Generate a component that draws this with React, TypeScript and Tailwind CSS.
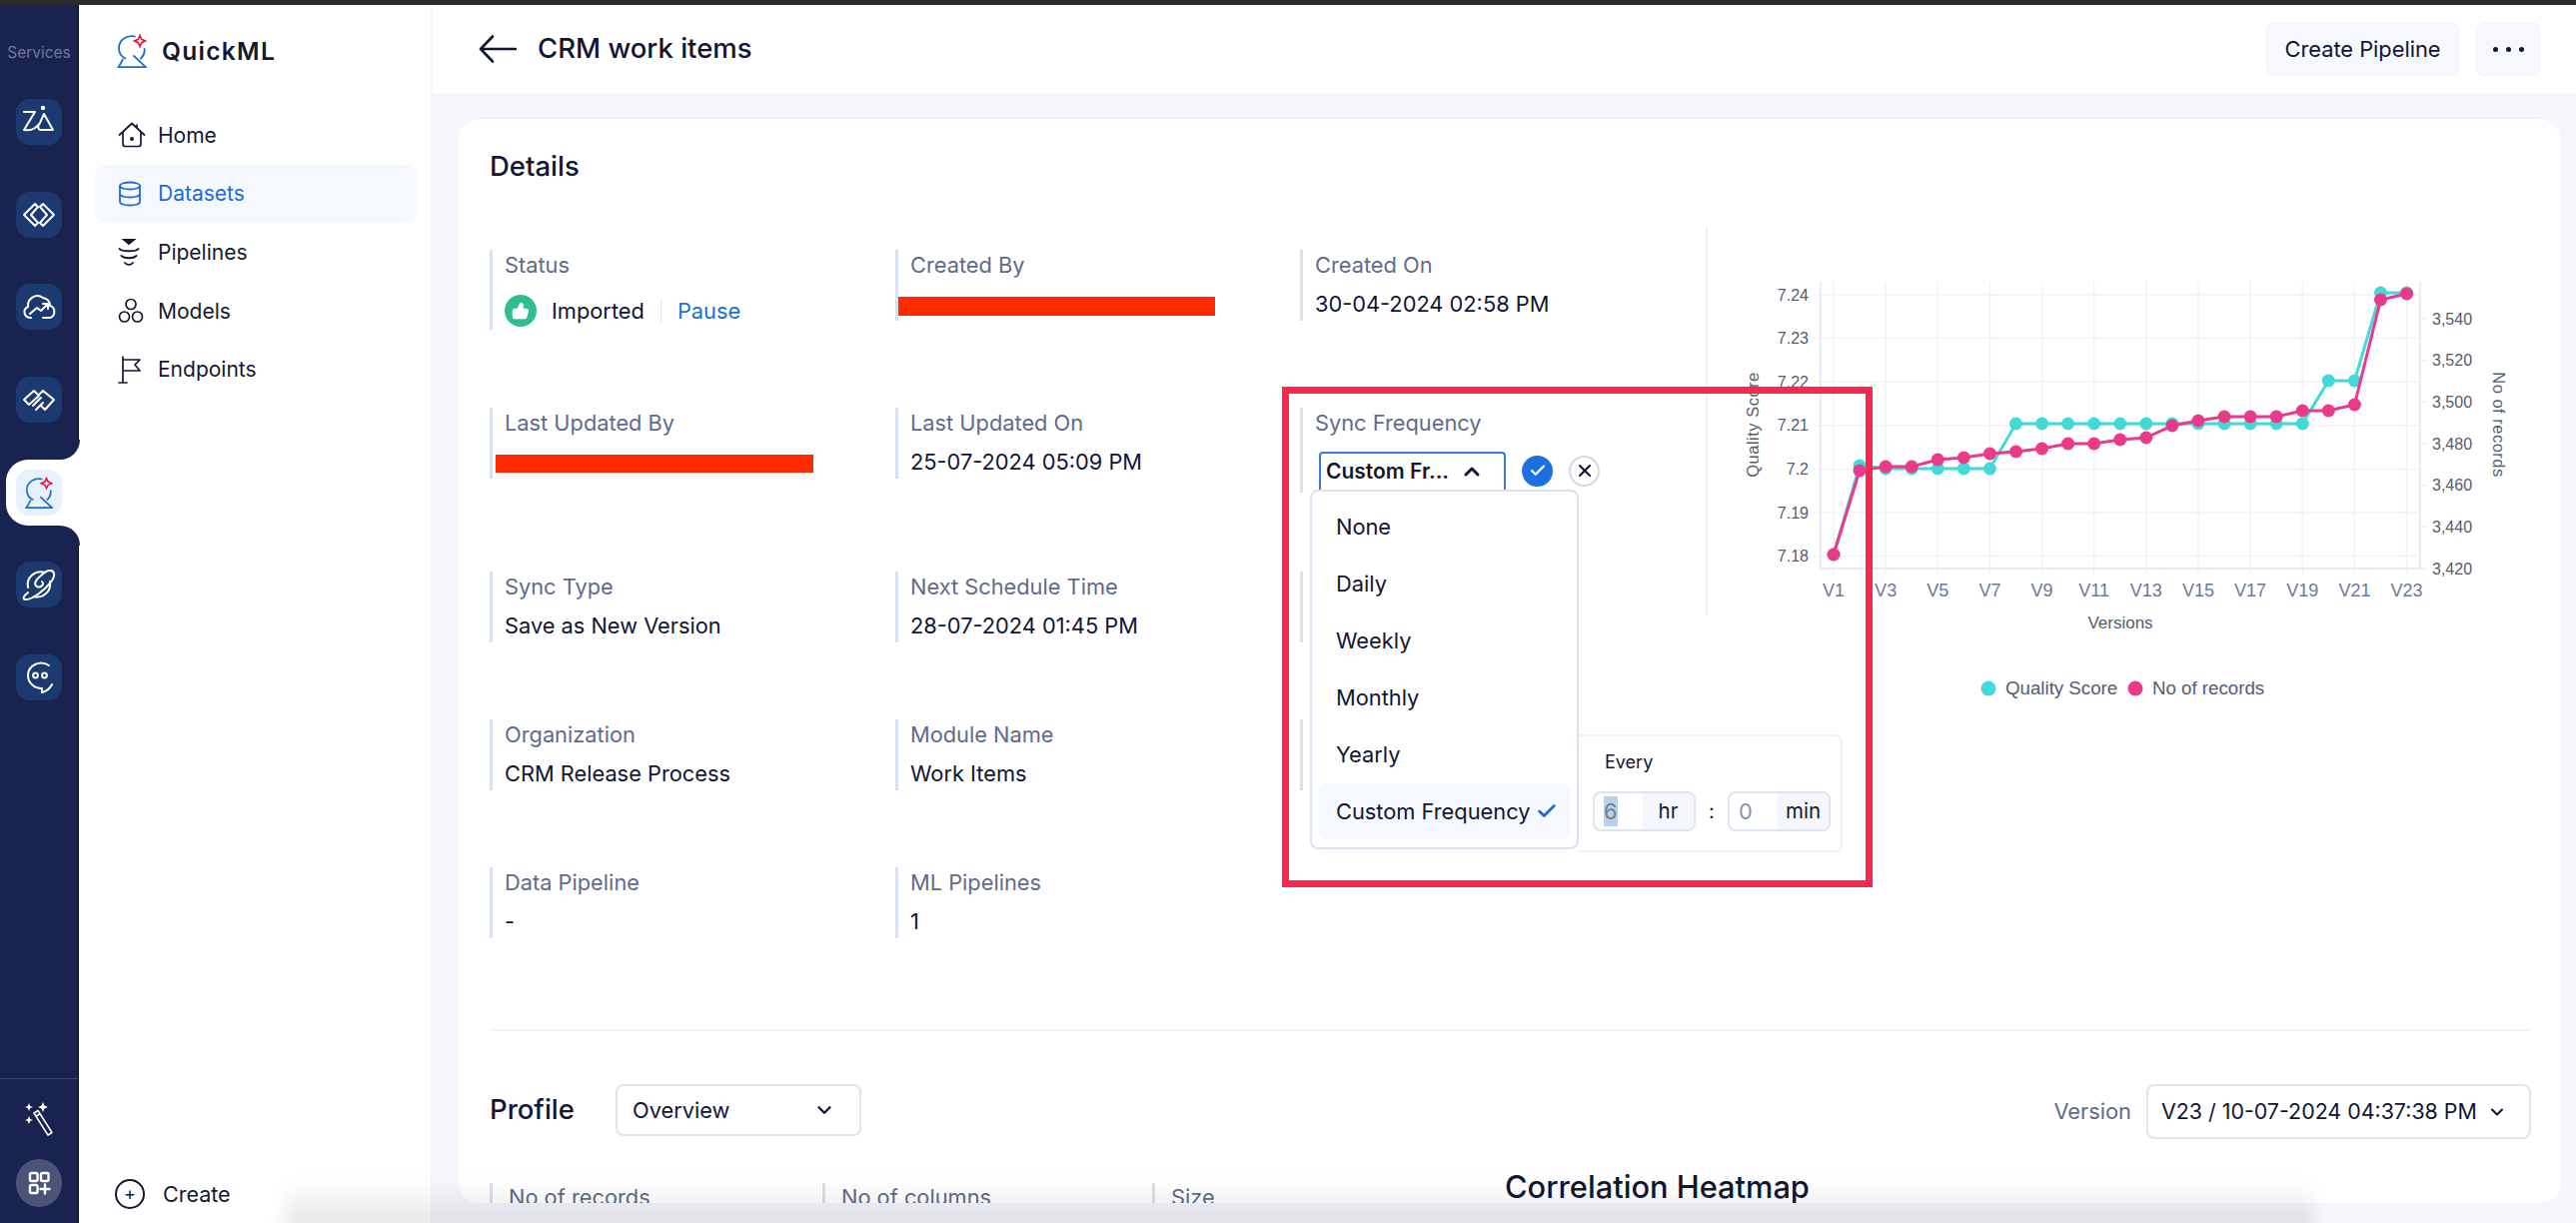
import { Check, ChevronDown, ChevronUp, ThumbsUp, X } from "lucide-react";
import type { ReactNode } from "react";

const NAVY = "bg-[#18244f]";

function QuickLogo({ className }: { className: string }) {
  return (
    <svg viewBox="0 0 30 34" fill="none" className={className} strokeLinecap="round">
      <path d="M18 2.500C10 0.500 2 6 2 14c0 5 3 9 6.500 10.500" stroke="#1c6fc4" strokeWidth="1.800" />
      <path d="M27.500 15c0.600 3.500-0.500 6.500-3.500 9.500M17 22l12 11.200H1.500l4.500-7.700" stroke="#1c6fc4" strokeWidth="1.800" />
      <path d="M23 1.500l1.700 3.800 3.800 1.700-3.800 1.700L23 12.500l-1.700-3.800L17.500 7l3.800-1.700z" stroke="#e8173f" strokeWidth="1.700" />
    </svg>
  );
}

function RailIcon({ children, active }: { children: ReactNode; active?: boolean }) {
  if (active) {
    return (
      <div className="relative h-[46px] w-[46px]">
        <div className="absolute -left-[10px] -right-[18px] -top-[10px] h-[66px] rounded-l-[22px] bg-white" />
        <div className="absolute -right-[18px] -top-[30px] h-5 w-5 bg-white">
          <div className={`h-full w-full rounded-br-[20px] ${NAVY}`} />
        </div>
        <div className="absolute -right-[18px] top-[56px] h-5 w-5 bg-white">
          <div className={`h-full w-full rounded-tr-[20px] ${NAVY}`} />
        </div>
        <div className="relative flex h-[46px] w-[46px] items-center justify-center rounded-[14px] bg-[#e8f0fb]">{children}</div>
      </div>
    );
  }
  return (
    <div className="flex h-[46px] w-[46px] items-center justify-center rounded-[14px] bg-[#1c3a70]">
      <svg viewBox="0 0 46 46" fill="none" stroke="white" strokeWidth="2" strokeLinecap="round" strokeLinejoin="round" className="h-[46px] w-[46px]">
        {children}
      </svg>
    </div>
  );
}

function Rail() {
  return (
    <div className={`z-10 flex w-[79px] shrink-0 flex-col items-center border-r border-[#0c1020] ${NAVY}`}>
      <div className="mt-[37px] h-[22px] whitespace-nowrap text-[15.500px] leading-[22px] text-[#6f7a9a]">Services</div>
      <div className="mt-[35px] flex flex-col gap-[46.700px]">
        <RailIcon>
          <path d="M8 13h11L8 31c6 1 12-1 16-7l4-9 9 16H25c-3 0-4-4-1-7" />
          <circle cx="27" cy="9" r="1.200" fill="white" />
        </RailIcon>
        <RailIcon>
          <path d="M19 12L8 23l11 11 3-3-7-8 7-8zM27 12l11 11-11 11-3-3 7-8-7-8z" />
        </RailIcon>
        <RailIcon>
          <path d="M15 34c-7 0-9-8-3-11-1-8 8-14 15-9 5 1 7 4 7 8 6 1 6 12-1 12h-6" />
          <path d="M14 30l7-6 4 3 7-7M27 20h5v5" />
        </RailIcon>
        <RailIcon>
          <path d="M18 14l-10 9 5 5 10-9zM17 29l8-8M20 33l7-7M27 14l11 9-9 10-4-4M27 14l-3 3" />
        </RailIcon>
        <RailIcon active>
          <QuickLogo className="h-[32px] w-[28px]" />
        </RailIcon>
        <RailIcon>
          <path d="M12 26A13 13 0 0 1 29 11M34 20A13 13 0 0 1 18 35" />
          <path d="M12 31c-6 5-5 7-2 7 6 0 19-9 26-19 4-6 2-10-2-10-3 0-6 2-9 5-5 4-8 9-4 11 4 2 8-3 5-5" />
        </RailIcon>
        <RailIcon>
          <path d="M33 11c-9-6-21 0-21 10 0 8 7 13 14 13l0 4c4-1 8-4 10-8" />
          <circle cx="19.500" cy="21" r="2.400" />
          <circle cx="28.500" cy="21" r="2.400" />
        </RailIcon>
      </div>
      <div className="mt-auto h-px w-full bg-[#3b4770]" />
      <svg viewBox="0 0 30 34" fill="none" className="mt-[23px] h-[34px] w-[30px]">
        <path d="M10 11l4-2.500 14 22-4 2.500zM11.500 14.500l4-2.500" stroke="white" strokeWidth="1.500" strokeLinejoin="round" />
        <path d="M19 0l1.500 3.500L24 5l-3.500 1.500L19 10l-1.500-3.500L14 5l3.500-1.500zM5 1l1.200 3L9 5 6.200 6 5 9 3.800 6 1 5l2.800-1zM5 14l1.200 3 2.800 1-2.800 1L5 22l-1.200-3L1 18l2.800-1z" fill="white" />
      </svg>
      <div className="mb-[16px] mt-[23px] flex h-[48px] w-[46px] items-center justify-center rounded-full bg-[#4a5478]">
        <svg viewBox="0 0 24 24" fill="none" stroke="white" strokeWidth="2.400" strokeLinecap="round" className="h-[26px] w-[24px]">
          <rect x="3" y="2" width="7.500" height="8" rx="1.500" />
          <rect x="14" y="2" width="7.500" height="8" rx="1.500" />
          <rect x="3" y="14" width="7.500" height="8" rx="1.500" />
          <path d="M18 13.500v9M13.500 18h9" />
        </svg>
      </div>
    </div>
  );
}

function HomeIcon() {
  return (
    <svg viewBox="0 0 28 26" fill="none" stroke="#15192f" strokeWidth="1.700" strokeLinecap="round" strokeLinejoin="round" className="h-[26px] w-[28px]">
      <path d="M1.500 13L14 1.500 26.500 13M5 10.500V22a2.500 2.500 0 002.500 2.500h13A2.500 2.500 0 0023 22V10.500M19 5.500V3" />
      <circle cx="14" cy="17" r="1.100" fill="#15192f" />
    </svg>
  );
}

function DatabaseIcon() {
  return (
    <svg viewBox="0 0 24 26" fill="none" stroke="#1e6bd6" strokeWidth="1.800" className="h-[26px] w-[24px]">
      <ellipse cx="12" cy="5" rx="10" ry="3.500" />
      <path d="M2 5v16c0 2 4.500 3.500 10 3.500s10-1.500 10-3.500V5M2 13c0 2 4.500 3.500 10 3.500S22 15 22 13" />
    </svg>
  );
}

function PipelineIcon() {
  return (
    <svg viewBox="0 0 22 28" fill="none" stroke="#15192f" strokeWidth="1.800" strokeLinecap="round" className="h-[28px] w-[22px]">
      <path d="M6 1h10l-5 4z" fill="#15192f" />
      <path d="M1.500 10c2 3 17 3 19 0M3.500 17c3 3 12 3 15 0M7 24c2 2.500 6 2.500 8 0" />
    </svg>
  );
}

function ModelsIcon() {
  return (
    <svg viewBox="0 0 26 26" fill="none" stroke="#15192f" strokeWidth="1.700" className="h-[26px] w-[26px]">
      <circle cx="13" cy="6.500" r="5" />
      <circle cx="6.500" cy="19" r="5" />
      <circle cx="19.500" cy="19" r="5" />
    </svg>
  );
}

function FlagIcon() {
  return (
    <svg viewBox="0 0 24 28" fill="none" stroke="#15192f" strokeWidth="1.700" strokeLinecap="round" strokeLinejoin="round" className="h-[28px] w-[24px]">
      <path d="M5 1v26M1 27h8M5 4h17l-5 5 5 6H5" />
    </svg>
  );
}

function NavItem({ label, icon, active }: { label: string; icon: ReactNode; active?: boolean }) {
  return (
    <div className={`flex h-[58.700px] items-center rounded-xl pl-[23px] text-[21px] ${active ? "bg-[#f5f8fe] text-[#1e6bd6]" : "text-[#15192f]"}`}>
      <div className="flex w-[40px] justify-start">{icon}</div>
      {label}
    </div>
  );
}

function Sidebar() {
  return (
    <div className="flex w-[354px] shrink-0 flex-col border-r-2 border-[#f5f7fd] bg-white">
      <div className="ml-[38px] mt-[29px] flex h-[34px] items-center gap-[15px]">
        <QuickLogo className="h-[34px] w-[30px]" />
        <span className="text-[24.500px] font-semibold tracking-[1.300px] text-[#15192f]">QuickML</span>
      </div>
      <div className="ml-[16px] mr-[13px] mt-[38px] flex flex-col">
        <NavItem label="Home" icon={<HomeIcon />} />
        <NavItem label="Datasets" icon={<DatabaseIcon />} active />
        <NavItem label="Pipelines" icon={<PipelineIcon />} />
        <NavItem label="Models" icon={<ModelsIcon />} />
        <NavItem label="Endpoints" icon={<FlagIcon />} />
      </div>
      <div className="mb-[13px] ml-[36px] mt-auto flex items-center gap-[18px] text-[21.500px] text-[#15192f]">
        <div className="flex h-[30px] w-[30px] items-center justify-center rounded-full border-2 border-[#15192f] text-[18px] leading-none">+</div>
        Create
      </div>
    </div>
  );
}

function Field({ label, children, border = "h-[71px]", gap = "mt-[11px]" }: { label?: string; children?: ReactNode; border?: string; gap?: string }) {
  return (
    <div className={`relative border-l-[3px] border-[#d8dfee] pl-[12px] pt-[1px] ${border}`}>
      {label && <div className="h-[28px] text-[21.800px] leading-[28px] text-[#5f6b8c]">{label}</div>}
      {children && <div className={`${gap} text-[21.800px] leading-[28px] text-[#111633]`}>{children}</div>}
    </div>
  );
}

const frequencies = ["None", "Daily", "Weekly", "Monthly", "Yearly"];

function SyncField() {
  return (
    <div className="relative h-[85px] border-l-[3px] border-[#d8dfee] pl-[12px] pt-[1px]">
      <div className="h-[28px] text-[21.800px] leading-[28px] text-[#5f6b8c]">Sync Frequency</div>
      <div className="ml-[4px] mt-[15px] flex items-center">
        <div className="flex h-[38px] w-[187px] items-center justify-between rounded-t-[4px] border-[2px] border-b-0 border-[#3d7bd6] pl-[5px] pr-[20px] text-[21px] font-semibold text-[#111633]">
          Custom Fr...
          <ChevronUp size={24} strokeWidth={3} />
        </div>
        <div className="ml-[16px] flex h-[31px] w-[31px] items-center justify-center rounded-full bg-[#1e6fe0]">
          <Check size={18} color="white" strokeWidth={3} />
        </div>
        <div className="ml-[16px] flex h-[31px] w-[31px] items-center justify-center rounded-full border-2 border-[#d8d8de] bg-white">
          <X size={20} color="#111633" strokeWidth={2.500} />
        </div>
      </div>
      <div className="absolute left-[7px] top-[82px] z-20 h-[360px] w-[269px] rounded-lg border-2 border-[#dbe1f0] bg-white px-[7px] pt-[7px] text-[21.800px] text-[#111633]">
        {frequencies.map((item) => (
          <div key={item} className="flex h-[57px] items-center pl-[17px]">
            {item}
          </div>
        ))}
        <div className="flex h-[56px] items-center justify-between rounded-lg bg-[#f5f8fe] pl-[17px] pr-[12px]">
          Custom Frequency
          <Check size={22} color="#1e6bd6" strokeWidth={3} />
        </div>
      </div>
      <div className="absolute left-[276px] top-[327px] z-10 h-[118px] w-[264px] rounded-r-lg border-2 border-l-0 border-[#eef0f7] bg-white pl-[26px] text-[#111633]">
        <div className="mt-[13px] text-[18px] leading-[26px]">Every</div>
        <div className="-ml-[12px] mt-[16px] flex items-center">
          <div className="flex h-[40px] w-[103px] overflow-hidden rounded-lg border-2 border-[#dde3f1]">
            <div className="flex w-[48px] items-center pl-[9px]">
              <span className="bg-[#b8d0ea] text-[21.800px] leading-[30px] text-[#6f7f94]">6</span>
            </div>
            <div className="flex flex-1 items-center justify-center bg-[#f5f7fc] text-[20.500px]">hr</div>
          </div>
          <span className="w-[32px] text-center text-[20px]">:</span>
          <div className="flex h-[40px] w-[103px] overflow-hidden rounded-lg border-2 border-[#dde3f1]">
            <div className="flex w-[48px] items-center pl-[9px] text-[21.800px] text-[#8c95a8]">0</div>
            <div className="flex flex-1 items-center justify-center bg-[#f5f7fc] text-[20.500px]">min</div>
          </div>
        </div>
      </div>
    </div>
  );
}

const teal = [555, 466, 469, 469, 469, 469, 469, 424, 424, 424, 424, 424, 424, 424, 424, 424, 424, 424, 424, 381, 381, 293, 293];
const pink = [555, 471, 467, 467, 460, 458, 454, 452, 449, 444, 444, 440, 438, 426, 421, 417, 417, 417, 411, 411, 405, 300, 294];
const vx = (i: number) => 1836 + i * 26.07;

function Chart() {
  const leftTicks = ["7.24", "7.23", "7.22", "7.21", "7.2", "7.19", "7.18"];
  const rightTicks = ["3,540", "3,520", "3,500", "3,480", "3,460", "3,440", "3,420"];
  const points = (ys: number[]) => ys.map((y, i) => `${vx(i)},${y}`).join(" ");
  return (
    <svg viewBox="1708 228 830 480" className="block h-[480px] w-[830px]" fontFamily="'Liberation Sans', sans-serif">
      {leftTicks.map((t, i) => {
        const y = 295 + i * 43.6;
        return (
          <g key={t}>
            <line x1="1823" x2="2423" y1={y} y2={y} stroke="#f2f2f5" strokeWidth="1.500" />
            <line x1="1816" x2="1823" y1={y} y2={y} stroke="#f2f2f5" strokeWidth="1.500" />
            <text x="1811" y={y + 5.500} textAnchor="end" fontSize="16" fill="#555c6e">
              {t}
            </text>
          </g>
        );
      })}
      {rightTicks.map((t, i) => {
        const y = 319 + i * 41.67;
        return (
          <g key={t}>
            <line x1="2423" x2="2430" y1={y} y2={y} stroke="#eeeef2" strokeWidth="1.500" />
            <text x="2435" y={y + 5.500} fontSize="16" fill="#555c6e">
              {t}
            </text>
          </g>
        );
      })}
      {teal.map((_, i) =>
        i % 2 === 0 ? (
          <g key={i}>
            <line x1={vx(i)} x2={vx(i)} y1="282" y2="575" stroke="#f2f2f5" strokeWidth="1.500" />
            <text x={vx(i)} y="597" textAnchor="middle" fontSize="18" fill="#6b7a99">
              V{i + 1}
            </text>
          </g>
        ) : null,
      )}
      <path d="M1823 282V569H2423V282" fill="none" stroke="#eaeaef" strokeWidth="2" />
      <polyline points={points(teal)} fill="none" stroke="#43d9d9" strokeWidth="3" />
      {teal.map((y, i) => (
        <circle key={i} cx={vx(i)} cy={y} r="6.500" fill="#43d9d9" />
      ))}
      <polyline points={points(pink)} fill="none" stroke="#ec3a8b" strokeWidth="3" />
      {pink.map((y, i) => (
        <circle key={i} cx={vx(i)} cy={y} r="6.500" fill="#ec3a8b" />
      ))}
      <text x="2123" y="629" textAnchor="middle" fontSize="17" fill="#555c6e">
        Versions
      </text>
      <text transform="translate(1761 425) rotate(-90)" textAnchor="middle" fontSize="16.500" letterSpacing="0.500" fill="#555c6e">
        Quality Score
      </text>
      <text transform="translate(2496 425) rotate(90)" textAnchor="middle" fontSize="16.500" letterSpacing="0.500" fill="#555c6e">
        No of records
      </text>
      <circle cx="1991" cy="689" r="7.500" fill="#43d9d9" />
      <text x="2008" y="695" fontSize="18.700" fill="#555c6e">
        Quality Score
      </text>
      <circle cx="2138" cy="689" r="7.500" fill="#ec3a8b" />
      <text x="2155" y="695" fontSize="18.700" fill="#555c6e">
        No of records
      </text>
    </svg>
  );
}

function Stat({ label, width }: { label: string; width: string }) {
  return (
    <div className={`mt-[14px] h-[40px] shrink-0 border-l-[3px] border-[#d8dfee] pl-[16px] text-[21.800px] leading-[28px] text-[#5f6b8c] ${width}`}>{label}</div>
  );
}

function Card() {
  return (
    <div className="ml-[26px] mt-[25px] h-[1086px] w-[2103px] overflow-hidden rounded-[20px] border-t border-[#eef1f9] bg-white pl-[31px]">
      <div className="mt-[31px] h-[32px] text-[27.500px] font-medium leading-[32px] text-[#111633]">Details</div>
      <div className="mt-[46px] flex h-[802px]">
        <div className="grid h-fit w-[1217px] grid-cols-[406px_405px_1fr] grid-rows-[158px_164px_148px_148px_80px] pt-[22px]">
          <Field label="Status" border="h-[80px]" gap="mt-[16px]">
            <div className="flex items-center">
              <div className="mr-[15px] flex h-[32px] w-[32px] items-center justify-center rounded-full bg-[#2fbf8f]">
                <ThumbsUp size={18} fill="white" color="white" />
              </div>
              Imported
              <div className="mx-[16px] h-[25px] w-px bg-[#dfe3ee]" />
              <span className="text-[#1a6fd8]">Pause</span>
            </div>
          </Field>
          <Field label="Created By" gap="mt-[18px]">
            <div className="-ml-[12px] h-[19px] w-[317px] bg-[#ff2a00]" />
          </Field>
          <Field label="Created On">30-04-2024 02:58 PM</Field>
          <Field label="Last Updated By" gap="mt-[18px]">
            <div className="-ml-[9px] h-[18px] w-[318px] bg-[#ff2a00]" />
          </Field>
          <Field label="Last Updated On">25-07-2024 05:09 PM</Field>
          <SyncField />
          <Field label="Sync Type">Save as New Version</Field>
          <Field label="Next Schedule Time">28-07-2024 01:45 PM</Field>
          <Field />
          <Field label="Organization">CRM Release Process</Field>
          <Field label="Module Name">Work Items</Field>
          <Field />
          <Field label="Data Pipeline">-</Field>
          <Field label="ML Pipelines">1</Field>
        </div>
        <div className="relative">
          <div className="absolute left-0 top-0 h-[387px] w-[2px] bg-[#eef0f5]" />
          <Chart />
        </div>
      </div>
      <div className="w-[2043px] border-t-2 border-[#f3f4f8]">
        <div className="flex items-start justify-between pt-[53px]">
          <div className="flex items-center">
            <span className="w-[126px] text-[27.500px] font-medium text-[#111633]">Profile</span>
            <div className="flex h-[52px] w-[246px] items-center justify-between rounded-lg border-2 border-[#dfe3f0] pl-[15px] pr-[24px] text-[21.800px] text-[#111633]">
              Overview
              <ChevronDown size={22} strokeWidth={2.500} />
            </div>
          </div>
          <div className="flex items-center">
            <span className="mr-[15px] text-[21.800px] text-[#5f6b8c]">Version</span>
            <div className="flex h-[55px] w-[385px] items-center justify-between rounded-lg border-2 border-[#dfe3f0] pl-[13px] pr-[22px] text-[21.400px] text-[#111633]">
              V23 / 10-07-2024 04:37:38 PM
              <ChevronDown size={20} strokeWidth={2.500} />
            </div>
          </div>
        </div>
        <div className="mt-[30px] flex items-start">
          <Stat label="No of records" width="w-[333px]" />
          <Stat label="No of columns" width="w-[330px]" />
          <Stat label="Size" width="w-[353px]" />
          <span className="text-[30.800px] font-medium leading-[36px] text-[#111633]">Correlation Heatmap</span>
        </div>
      </div>
    </div>
  );
}

export default function App() {
  return (
    <div className="relative flex h-screen w-screen flex-col overflow-hidden bg-white font-[Inter,sans-serif]">
      <div className="h-[5px] shrink-0 bg-[#2b2b2d]" />
      <div className="flex min-h-0 flex-1">
        <Rail />
        <Sidebar />
        <div className="flex min-w-0 flex-1 flex-col bg-[#f5f7fd]">
          <div className="flex h-[88px] shrink-0 items-center justify-between bg-white pl-[46px] pr-[36px]">
            <div className="flex items-center gap-[21px]">
              <svg viewBox="0 0 38 28" fill="none" stroke="#111633" strokeWidth="2.600" strokeLinecap="round" strokeLinejoin="round" className="h-[28px] w-[38px]">
                <path d="M37 14H2M14 1.500L2 14l12 12.500" />
              </svg>
              <span className="text-[27.500px] font-medium text-[#111633]">CRM work items</span>
            </div>
            <div className="flex items-center gap-[17px]">
              <div className="flex h-[54px] w-[193px] items-center justify-center rounded-lg border border-[#f0f2f9] bg-[#f6f8fd] text-[21.800px] text-[#111633]">Create Pipeline</div>
              <div className="flex h-[54px] w-[64px] items-center justify-center gap-[8px] rounded-lg border border-[#f0f2f9] bg-[#f6f8fd]">
                <span className="h-[5px] w-[5px] rounded-full bg-[#111633]" />
                <span className="h-[5px] w-[5px] rounded-full bg-[#111633]" />
                <span className="h-[5px] w-[5px] rounded-full bg-[#111633]" />
              </div>
            </div>
          </div>
          <Card />
        </div>
      </div>
      <div className="pointer-events-none absolute left-[1283px] top-[387px] z-30 h-[501px] w-[591px] border-[7px] border-[#f9264f]" />
      <div className="pointer-events-none absolute -bottom-[6px] left-[285px] z-30 h-[50px] w-[2030px] bg-linear-to-t from-black/12 via-black/5 to-transparent blur-sm" />
    </div>
  );
}
